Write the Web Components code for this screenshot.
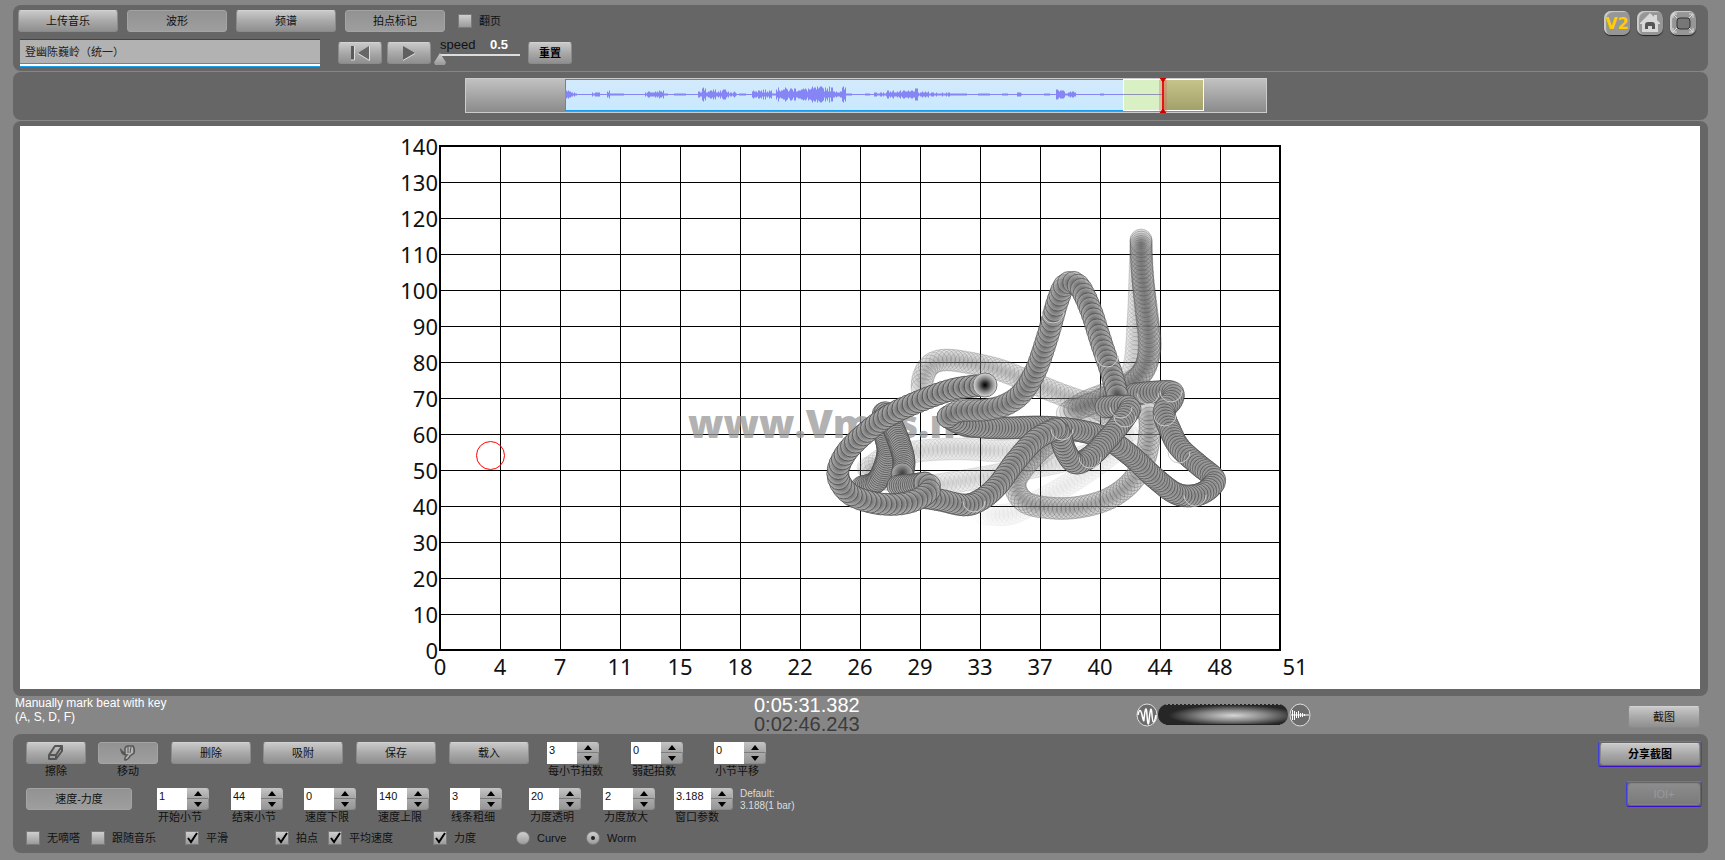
<!DOCTYPE html>
<html lang="zh-CN">
<head>
<meta charset="utf-8">
<title>Vmus</title>
<style>
  html { background: #868686; }
  body { margin: 0; font: 11px/14px "Liberation Sans", "Noto Sans CJK SC", sans-serif; color: #111; }
</style>
</head>
<body>
<vm-app></vm-app>
<script>
const define = (name, html, setup) => {
  const tpl = document.createElement('template');
  tpl.innerHTML = html;
  customElements.define(name, class extends HTMLElement {
    connectedCallback() {
      if (this.shadowRoot) return;
      this.attachShadow({ mode: 'open' }).append(tpl.content.cloneNode(true));
      if (setup) setup.call(this, this.shadowRoot);
    }
  });
};

/* Push button; "down" is the toggled look, "ring" adds the blue frame */
define('vm-button', `
<style>
  :host { display: block; box-sizing: border-box; height: 22px; width: 80px; }
  button { display: flex; align-items: center; justify-content: center; box-sizing: border-box; width: 100%; height: 100%;
    margin: 0; padding: 0; border: 1px solid #8a8a8a; border-top-color: #d2d2d2; border-radius: 3px; font: inherit; color: #111;
    background: linear-gradient(#c9c9c9, #a9a9a9 50%, #8f8f8f); }
  :host([down]) button { background: linear-gradient(#929292, #9e9e9e); border-color: #a4a4a4; }
  :host([ring]) { height: 26px; padding: 1px; border-radius: 3px; border: 1px solid; border-color: #3a86dd #4040d8 #3a10c8; }
  :host([ring]) button { font-weight: bold; color: #000; }
  :host([faded]) button { background: linear-gradient(#8c8c8c, #7b7b7b); border-color: #858585; color: #999; font-weight: normal; }
  :host([w="44"]) { width: 44px; } :host([w="60"]) { width: 60px; } :host([w="72"]) { width: 72px; }
  :host([w="100"]) { width: 100px; } :host([w="104"]) { width: 104px; } :host([w="76"]) { width: 76px; } :host([w="106"]) { width: 106px; }
  :host([bold]) button { font-weight: bold; color: #000; }
</style>
<button type="button"><slot></slot></button>`, function (root) {
  const label = this.getAttribute('label');
  if (label) root.querySelector('button').setAttribute('aria-label', label);
});

/* Tick box or radio with its label */
define('vm-check', `
<style>
  :host { display: block; }
  label { display: flex; align-items: center; gap: 7px; height: 14px; white-space: nowrap; }
  input { appearance: none; flex: none; margin: 0; width: 14px; height: 14px; background: linear-gradient(#cfcfcf, #9b9b9b); border: 1px solid #7b7b7b; display: grid; place-items: center; }
  input[type=radio] { border-radius: 50%; }
  input[type=radio]:checked::before { content: ""; width: 4px; height: 4px; border-radius: 50%; background: #222; }
  svg { position: absolute; margin-left: 2px; width: 11px; height: 12px; fill: none; stroke: #000; stroke-width: 2; pointer-events: none; }
</style>
<label><input type="checkbox"><slot></slot></label>`, function (root) {
  const input = root.querySelector('input');
  if (this.hasAttribute('radio')) { input.type = 'radio'; input.name = 'mode'; }
  if (this.hasAttribute('checked')) {
    input.checked = true;
    if (input.type === 'checkbox') input.insertAdjacentHTML('afterend', '<svg viewBox="0 0 11 12"><path d="M1 6L4 10L10 1"/></svg>');
  }
});

/* Number box with arrows and a caption below */
define('vm-stepper', `
<style>
  :host { display: grid; grid-template-columns: 30px 22px; justify-content: start; }
  :host([wide]) { grid-template-columns: 37px 22px; }
  input { grid-row: 1 / 3; box-sizing: border-box; width: 100%; height: 22px; margin: 0; padding: 0 0 6px 2px; border: 0; background: #fff; color: #111; font: inherit; line-height: 14px; }
  button { display: grid; place-items: center; margin: 0; padding: 0; height: 11px; border: 1px solid #8a8a8a; border-left: 0; background: linear-gradient(#c2c2c2, #a6a6a6); }
  .up { border-radius: 0 3px 0 0; border-color: #c4c4c4 #b0b0b0 #7c7c7c; }
  .down { border-top: 0; background: linear-gradient(#aaa, #969696); border-radius: 0 0 3px 0; }
  svg { width: 8px; height: 5px; fill: #000; display: block; }
  label { grid-column: 1 / 3; white-space: nowrap; padding-left: 1px; }
</style>
<input id="v" type="text" inputmode="decimal">
<button class="up" type="button" aria-label="+"><svg viewBox="0 0 8 5"><path d="M0 5L4 0L8 5z"/></svg></button>
<button class="down" type="button" aria-label="-"><svg viewBox="0 0 8 5"><path d="M0 0L4 5L8 0z"/></svg></button>
<label for="v"><slot></slot></label>`, function (root) {
  root.querySelector('input').value = this.getAttribute('value');
});

/* Icon above a caption */
define('vm-tool', `
<style>
  :host { display: block; width: 60px; text-align: center; }
  .cap { display: block; }
</style>
<slot></slot><span class="cap"><slot name="caption"></slot></span>`);

/* Rounded dark strip */
define('vm-panel', `
<style>
  :host { display: block; box-sizing: border-box; background: #666; border-radius: 8px; }
</style>
<slot></slot>`);

/* Overview of the recording */
define('vm-wave', `
<style>
  :host { display: block; height: 35px; width: 802px; }
  svg { display: block; width: 100%; height: 100%; }
</style>
<svg viewBox="465 78 802 35" preserveAspectRatio="none">
  <defs>
    <linearGradient id="g" x2="0" y2="1"><stop stop-color="#c2c2c2"/><stop offset="1" stop-color="#8a8a8a"/></linearGradient>
    <linearGradient id="o" x2="0" y2="1"><stop stop-color="#c6c489"/><stop offset="1" stop-color="#a3a16b"/></linearGradient>
    <linearGradient id="b" x2="0" y2="1"><stop stop-color="#d3eafb"/><stop offset="1" stop-color="#c9e9ff"/></linearGradient>
  </defs>
  <rect x="465.5" y="78.5" width="801" height="34" fill="url(#g)" stroke="#ccc"/>
  <rect x="565.5" y="79.5" width="558" height="31" fill="url(#b)" stroke="#1a9cf0"/>
  <rect x="1123.5" y="79.5" width="40" height="31" fill="#d9efc4" stroke="#fff"/>
  <rect x="1163.5" y="79.5" width="40" height="31" fill="url(#o)" stroke="#fff"/>
  <path id="w" stroke="#8585f5" fill="none"/>
  <path d="M1123 94.500H1163" stroke="#8f93b0"/>
  <rect x="1159" y="80" width="8" height="31" fill="#d86a5a" opacity=".35"/>
  <path d="M1163 79V112" stroke="#e01818" stroke-width="2"/>
  <path d="M1160 78h6l-3 4zM1160 113h6l-3-4z" fill="#d00000" stroke="#d00000"/>
</svg>`, function (root) {
  /* [from, to, amplitude] along the recording */
  const env = [[565,567,7],[567,571,4],[571,577,2],[592,600,2],[607,610,4],[610,624,1],[645,656,3],[656,664,4],[664,668,1],[674,686,1],[698,702,5],[702,706,8],[706,712,4],[712,716,6],[716,722,4],[722,726,7],[726,737,3],[739,746,1],[752,772,5],[772,776,3],[776,800,7],[800,812,7],[812,834,8],[834,842,4],[842,846,8],[846,852,1],[865,870,1],[874,886,2],[886,912,4],[912,918,6],[918,932,3],[932,950,2],[950,967,1],[978,990,1],[1002,1008,1],[1017,1022,2],[1044,1050,2],[1056,1064,5],[1064,1076,3],[1100,1104,1]];
  let d = 'M565 94.5H1123', seed = 7;
  for (let x = 565; x < 1123; x++) {
    seed = (seed * 1103515245 + 12345) % 2147483648;
    const e = env.find(s => x >= s[0] && x < s[1]);
    if (!e) continue;
    const a = Math.max(1, Math.round(e[2] * (0.4 + 0.6 * seed / 2147483648)));
    d += 'M' + (x + .5) + ' ' + (94.5 - a) + 'v' + 2 * a;
  }
  root.getElementById('w').setAttribute('d', d);
});

/* Tempo / loudness plot */
define('vm-plot', `
<style>
  :host { display: block; background: #fff; }
  svg { display: block; width: 100%; height: auto; }
  text { font: 22px "Noto Sans", sans-serif; fill: #111; }
  .y { text-anchor: end; } .x { text-anchor: middle; }
  .mark { font: 800 39px "Open Sans", sans-serif; fill: #999; opacity: .75; }
</style>
<svg viewBox="20 126 1680 563">
  <defs>
    <radialGradient id="ball"><stop stop-color="#333"/><stop offset=".5" stop-color="#777"/><stop offset="1" stop-color="#b4b4b4"/></radialGradient>
    <radialGradient id="head"><stop stop-color="#000"/><stop offset=".25" stop-color="#333"/><stop offset=".6" stop-color="#8c8c8c"/><stop offset="1" stop-color="#ddd"/></radialGradient>
  </defs>
  <g id="grid" stroke="#000"></g>
  <rect x="440" y="146" width="840" height="504" fill="none" stroke="#000" stroke-width="2"/>
  <g id="labels"></g>
  <text class="mark" x="688" y="438">www.Vmus.net</text>
  <g id="worm"></g>
  <circle cx="490.500" cy="455.500" r="14" fill="none" stroke="#f00"/>
</svg>`, function (root) {
  let lines = '', labels = '';
  const xs = [0, 4, 7, 11, 15, 18, 22, 26, 29, 33, 37, 40, 44, 48, 51];
  for (let i = 1; i < 14; i++) {
    lines += `<path d="M${440.5 + 60 * i} 146V650M440 ${146.5 + 36 * i}H1280"/>`;
  }
  xs.forEach((v, i) => {
    labels += `<text class="y" x="438" y="${155 + 36 * i}">${140 - 10 * i}</text>`;
    labels += `<text class="x" x="${i === 14 ? 1295 : 440 + 60 * i}" y="675">${v}</text>`;
  });
  root.getElementById('grid').innerHTML = lines;
  root.getElementById('labels').innerHTML = labels;

  /* Stretches of the worm, oldest first: opacity from, opacity to, spacing, points */
  const runs = [
    [.04,.07,4,[[985,514],[1010,514],[1040,500],[1075,480],[1110,455],[1130,435]]],
    [.08,.14,4,[[1130,430],[1095,452],[1060,462],[1020,470],[980,478],[930,486]]],
    [.10,.16,4,[[1040,449],[1000,451],[960,449],[920,451],[885,458],[868,470]]],
    [.18,.2,4,[[868,468],[875,476],[895,481],[910,482]]],
    [.12,.22,4,[[1035,458],[1060,440],[1090,420],[1115,400],[1133,370],[1138,320],[1140,270],[1141,240]]],
    [.30,.34,4,[[1141,240],[1143,280],[1148,320],[1150,350],[1140,375],[1115,390],[1085,402],[1065,415]]],
    [.24,.28,4,[[1115,418],[1090,405],[1060,394],[1030,382],[1000,370],[970,363],[945,360],[930,365],[923,378],[922,390]]],
    [.32,.42,4,[[1065,430],[1040,450],[1022,470],[1015,486],[1025,502],[1050,508],[1080,507],[1110,498],[1133,480],[1146,455],[1150,425],[1147,408]]],
    [.38,.46,4,[[1075,410],[1100,400],[1130,385],[1146,366],[1149,340],[1146,310],[1142,270],[1141,240]]],
    [.8,.9,3,[[1135,394],[1155,392],[1172,392],[1172,400],[1164,412],[1170,430],[1180,448],[1200,466],[1214,478],[1211,487],[1197,495],[1177,494],[1155,478],[1130,455],[1105,438],[1075,430],[1040,427],[1000,428],[965,425],[948,417]]],
    [.8,.85,5,[[948,417],[960,411],[985,410],[1005,405],[1022,393],[1036,370],[1048,335],[1058,300],[1066,284],[1078,285],[1090,308],[1102,345],[1112,375],[1118,398]]],
    [.85,.9,3,[[1106,407],[1125,406],[1130,409],[1120,424],[1105,442],[1090,457],[1075,463],[1065,450],[1060,434],[1055,429]]],
    [.85,.9,4,[[1055,429],[1035,440],[1015,462],[998,485],[982,499],[965,505],[940,500],[920,497]]],
    [.85,.9,2,[[862,487],[876,482],[884,468],[888,450],[884,430],[884,412],[892,425],[900,445],[904,462],[902,475]]],
    [.9,.9,2,[[898,486],[912,485],[925,483]]],
    [.9,1,5,[[925,483],[931,488],[920,498],[900,504],[875,503],[850,494],[838,476],[844,456],[862,436],[890,415],[925,399],[955,389],[985,385]]]
  ];
  let out = '';
  for (const [o1, o2, step, p] of runs) {
    /* Catmull-Rom curve sampled at an even spacing */
    const pts = [];
    for (let i = 0; i < p.length - 1; i++) {
      const a = p[i - 1] || p[i], b = p[i], c = p[i + 1], e = p[i + 2] || c;
      for (let t = 0; t < 1; t += .02) {
        const f = k => .5 * (2 * b[k] + (c[k] - a[k]) * t + (2 * a[k] - 5 * b[k] + 4 * c[k] - e[k]) * t * t + (3 * b[k] - a[k] - 3 * c[k] + e[k]) * t * t * t);
        pts.push([f(0), f(1)]);
      }
    }
    let last = null;
    pts.forEach(([x, y], i) => {
      if (last && Math.hypot(x - last[0], y - last[1]) < step) return;
      last = [x, y];
      const o = o1 + (o2 - o1) * i / pts.length;
      const fill = o < .6 ? o * .5 : o * .8;
      out += `<circle cx="${x.toFixed(1)}" cy="${y.toFixed(1)}" r="11" fill="url(#ball)" fill-opacity="${fill.toFixed(3)}" stroke="#444" stroke-width=".8" stroke-opacity="${o.toFixed(3)}"/>`;
    });
  }
  for (const [x, y] of [[1062,429],[1090,457],[1125,416],[1121,407],[1053,312],[1107,356],[1148,393],[1171,391],[1165,415],[1179,452],[1195,495],[974,501]])
    out += `<circle cx="${x}" cy="${y}" r="11" fill="none" stroke="#ccc" stroke-width="1" stroke-dasharray="34 36"/>`;
  out += '<circle cx="985" cy="385" r="12" fill="url(#head)" stroke="#777"/>';
  root.getElementById('worm').innerHTML = out;
});

define('vm-app', `
<style>
  :host { display: block; padding: 5px 17px 7px 13px; }
  .row { display: flex; align-items: center; }
  .top { display: flex; justify-content: space-between; height: 66px; padding: 5px 12px 0 5px; }
  .line1 { gap: 9px; } .line1 vm-check { margin-left: 4px; }
  .line2 { margin: 7px 0 0 2px; align-items: flex-start; }
  .name { box-sizing: border-box; width: 300px; height: 28px; margin: 0 18px 0 0; padding: 0 5px 6px; border: 0; border-top: 1px solid #444;
    background: #b2b2b2; font: inherit; color: #222; box-shadow: inset 0 -1px #1a9cf0, inset 0 -3px #fff, inset 0 -4px #1a9cf0; border-radius: 0; }
  .line2 vm-button { margin: 3px 5px 0 0; }
  .speed { display: grid; grid-template-columns: 50px 1fr; width: 84px; margin: -2px 4px 0; line-height: 16px; }
  .speed label, .speed output { font-size: 13px; } .speed output { color: #fff; font-weight: bold; }
  .speed input { grid-column: 1 / 3; appearance: none; margin: 0; width: 80px; height: 12px; background: linear-gradient(#ddd, #ddd) 0 1px / 100% 2px no-repeat; }
  .speed input::-webkit-slider-thumb { appearance: none; width: 12px; height: 12px; margin-left: -6px; background: linear-gradient(#ccc, #999); clip-path: polygon(50% 0, 100% 80%, 90% 100%, 10% 100%, 0 80%); }
  .icons { display: flex; gap: 7px; margin-top: 1px; }
  .icons button { width: 26px; height: 24px; padding: 0; border: 0; border-radius: 7px; background: #969696; box-shadow: 0 1px 1px #222, inset 2px 1px 1px #ccc; color: #fc0; font: bold 16px "DejaVu Sans", sans-serif; display: grid; place-items: center; }
  .icons svg { width: 24px; height: 24px; }
  .overview { display: flex; justify-content: center; height: 48px; margin-top: 1px; padding: 6px 0 0 10px; }
  .chart { margin-top: 1px; padding: 5px 8px 7px 7px; }
  .status { display: grid; grid-template-columns: 741fr 105px 849fr; height: 38px; }
  .hint { color: #fff; font-size: 12px; line-height: 14px; margin: 0; padding: 0 0 0 2px; }
  .time { color: #fff; font-size: 20px; line-height: 19px; } .time div + div { color: #3c3c3c; }
  .right { display: flex; justify-content: space-between; padding: 7px 8px 0 277px; }
  .vol svg { display: block; width: 176px; height: 24px; } .right vm-button { margin-top: 3px; }
  .tools { display: flex; justify-content: space-between; padding: 7px 6px 0 13px; height: 119px; }
  .rows { padding-top: 1px; display: grid; grid-template-rows: 46px 43px 14px; }
  .r1, .r2, .r3 { display: grid; align-items: start; }
  .r1 { grid-template-columns: 72px 73px 92px 93px 93px 98px 84px 83px 60px; }
  .r2 { grid-template-columns: 131px 74px 73px 73px 73px 79px 74px 71px 66px 80px; }
  .r3 { grid-template-columns: 65px 94px 90px 53px 105px 83px 70px 70px; }
  .def { color: #ddd; margin: 0; line-height: 12px; font-size: 10px; }
  .share { display: grid; gap: 14px; align-content: start; justify-items: end; }
  .i { width: 20px; height: 18px; fill: none; stroke: #555; stroke-width: 2; }
</style>
<vm-panel class="top">
  <div>
    <div class="row line1"><vm-button w="100">上传音乐</vm-button><vm-button w="100" down>波形</vm-button><vm-button w="100">频谱</vm-button><vm-button w="100" down>拍点标记</vm-button><vm-check>翻页</vm-check></div>
    <div class="row line2">
      <input class="name" type="text" aria-label="曲名" value="登幽陈巍岭（统一）">
      <vm-button w="44" label="回到开头"><svg class="i" viewBox="0 0 20 18"><path d="M0 2h4v14H1V2" fill="#5a5a5a" stroke="none"/><path d="M19 2L8 9L19 16z" fill="#666" stroke="none"/><path d="M4.500 2V16H1M19.500 2V16.500L8 9.500" stroke="#ddd" stroke-width="1"/></svg></vm-button>
      <vm-button w="44" label="播放"><svg class="i" viewBox="0 0 20 18"><path d="M4 2L16 9L4 16z" fill="#606060" stroke="none"/><path d="M16 9.500L4 16.500" stroke="#ddd" stroke-width="1"/></svg></vm-button>
      <div class="speed"><label for="sp">speed</label><output for="sp">0.5</output><input id="sp" type="range" min="0.5" max="2" step="0.1" value="0.5"></div>
      <vm-button w="44" bold>重置</vm-button>
    </div>
  </div>
  <div class="icons">
    <button type="button">V2</button>
    <button type="button" aria-label="主页"><svg viewBox="0 0 24 24"><path d="M2 12L12 2L16 6V4h3v5l3 3v1h-2v8H4v-8H2z" fill="#d8d8d8"/><path d="M7 18v-4q0-3 3-3h4q3 0 3 3v4h-3v-3h-4v3z" fill="#555"/></svg></button>
    <button type="button" aria-label="全屏"><svg viewBox="0 0 24 24" fill="none"><rect x="6" y="7" width="13" height="11" rx="3" fill="#777" stroke="#333"/><path d="M2 7V3h4M2 3l4 4M18 3h4v4M22 3l-4 4M2 17v4h4M2 21l4-4M22 17v4h-4M22 21l-4-4" stroke="#ddd"/></svg></button>
  </div>
</vm-panel>
<vm-panel class="overview"><vm-wave></vm-wave></vm-panel>
<vm-panel class="chart"><vm-plot></vm-plot></vm-panel>
<div class="status">
  <p class="hint">Manually mark beat with key<br>(A, S, D, F)</p>
  <div class="time"><div>0:05:31.382</div><div>0:02:46.243</div></div>
  <div class="right">
    <div class="vol"><svg viewBox="0 0 176 24">
      <defs><radialGradient id="p" cx=".58" cy=".55" r=".5"><stop stop-color="#d6d6d6"/><stop offset=".5" stop-color="#888"/><stop offset="1" stop-color="#262626"/></radialGradient></defs>
      <ellipse cx="11" cy="12" rx="10" ry="11" fill="#6c6c6c" stroke="#ddd"/>
      <path d="M2 12Q4 3 6 12T8 16Q10 -2 11 12T13 18Q15 -2 16 12T20 12" fill="none" stroke="#fff" stroke-width="1.500"/>
      <rect x="22" y="1" width="130" height="21" rx="10" fill="url(#p)"/><path d="M30 1.500H144" stroke="#888" stroke-dasharray="2 2"/><path d="M30 21.500H144" stroke="#222"/>
      <ellipse cx="164" cy="12" rx="10" ry="11" fill="#6c6c6c" stroke="#ddd"/>
      <path d="M156.500 7v10M158.500 8v9M160.500 9v6M162.500 8v7M164.500 10v4M166.500 10v4M168.500 11v2M155 12h18" stroke="#fff"/>
    </svg></div>
    <vm-button w="72">截图</vm-button>
  </div>
</div>
<vm-panel class="tools">
  <div class="rows">
    <div class="r1">
      <vm-tool><vm-button w="60" label="擦除"><svg class="i" viewBox="0 0 20 18"><path d="M3 11L9 2h7l-6 9zM3 11v4h7v-4M10 15l6-8V2" stroke-linejoin="round"/></svg></vm-button><span slot="caption">擦除</span></vm-tool>
      <vm-tool><vm-button w="60" down label="移动"><svg class="i" viewBox="0 0 20 18"><path d="M3 6l4 4V4q1-2 3-2h5q2 3 1 7l-4 3q-2 4-5 4-1-2 2-5Q4 11 3 6z" fill="#b4b4b4" stroke-width="1.500"/><path d="M10 3v6M13 3l-1 6" stroke-width="1"/></svg></vm-button><span slot="caption">移动</span></vm-tool>
      <vm-button>删除</vm-button><vm-button>吸附</vm-button><vm-button>保存</vm-button><vm-button>载入</vm-button>
      <vm-stepper value="3">每小节拍数</vm-stepper><vm-stepper value="0">弱起拍数</vm-stepper><vm-stepper value="0">小节平移</vm-stepper>
    </div>
    <div class="r2">
      <vm-button w="106" down>速度-力度</vm-button>
      <vm-stepper value="1">开始小节</vm-stepper><vm-stepper value="44">结束小节</vm-stepper><vm-stepper value="0">速度下限</vm-stepper><vm-stepper value="140">速度上限</vm-stepper><vm-stepper value="3">线条粗细</vm-stepper><vm-stepper value="20">力度透明</vm-stepper><vm-stepper value="2">力度放大</vm-stepper><vm-stepper value="3.188" wide>窗口参数</vm-stepper>
      <p class="def">Default:<br>3.188(1 bar)</p>
    </div>
    <div class="r3">
      <vm-check>无嘀嗒</vm-check><vm-check>跟随音乐</vm-check><vm-check checked>平滑</vm-check><vm-check checked>拍点</vm-check><vm-check checked>平均速度</vm-check><vm-check checked>力度</vm-check><vm-check radio>Curve</vm-check><vm-check radio checked>Worm</vm-check>
    </div>
  </div>
  <div class="share"><vm-button w="104" ring>分享截图</vm-button><vm-button w="76" ring faded>IOI+</vm-button></div>
</vm-panel>`);
</script>
</body>
</html>
